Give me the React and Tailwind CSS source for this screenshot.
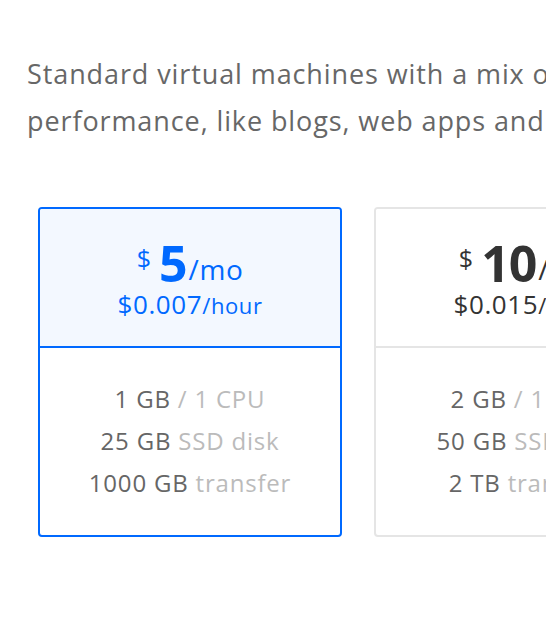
import React from 'react';

const plans = [
  { price: '5', hourly: '0.007', mem: '1 GB', cpu: '1 CPU', disk: '25 GB', transfer: '1000 GB', selected: true },
  { price: '10', hourly: '0.015', mem: '2 GB', cpu: '1 CPU', disk: '50 GB', transfer: '2 TB' },
  { price: '20', hourly: '0.030', mem: '4 GB', cpu: '2 CPUs', disk: '80 GB', transfer: '4 TB' },
];

function PlanCard({ plan }) {
  const sel = plan.selected;
  return (
    <div
      className={`w-[304px] shrink-0 rounded-[4px] border-2 ${sel ? 'border-[#0069ff]' : 'border-[#e5e5e5]'} overflow-hidden`}
    >
      <div
        className={`h-[139px] flex flex-col items-center pt-[29px] border-b-2 ${sel ? 'bg-[#f3f8ff] border-[#0069ff] text-[#0069ff]' : 'bg-white border-[#e5e5e5] text-[#333]'}`}
      >
        <div className="flex items-start leading-none">
          <span className="text-[25px] mt-[8px] mr-[8px]">$</span>
          <span className="text-[50px] font-bold tracking-[-1px]">{plan.price}</span>
          <span className="text-[28px] mt-[17px] ml-[2px] tracking-[0.6px]">/mo</span>
        </div>
        <div className="mt-[3px] leading-none tracking-[0.6px]">
          <span className="text-[26px]">${plan.hourly}</span>
          <span className="text-[22px]">/hour</span>
        </div>
      </div>
      <div className="h-[187px] flex flex-col items-center pt-[30px] text-[24px] leading-[42px] tracking-[0.8px] text-[#666]">
        <div>
          {plan.mem} <span className="text-[#bbb]">/ {plan.cpu}</span>
        </div>
        <div>
          {plan.disk} <span className="text-[#bbb]">SSD disk</span>
        </div>
        <div>
          {plan.transfer} <span className="text-[#bbb]">transfer</span>
        </div>
      </div>
    </div>
  );
}

export default function App() {
  return (
    <div className="w-[546px] h-[636px] overflow-hidden bg-white font-['Open_Sans',sans-serif]">
      <div className="w-[1200px]">
        <p className="pl-[27px] pt-[50px] text-[27px] leading-[47px] tracking-[0.9px] text-[#676767] whitespace-nowrap">
          Standard virtual machines with a mix of memory and compute resources. Best for small projects that
          <br />
          performance, like blogs, web apps and dev/test environments with low traffic.
        </p>
        <div className="flex gap-[32px] ml-[38px] mt-[63px]">
          {plans.map((p) => (
            <PlanCard key={p.price} plan={p} />
          ))}
        </div>
      </div>
    </div>
  );
}
